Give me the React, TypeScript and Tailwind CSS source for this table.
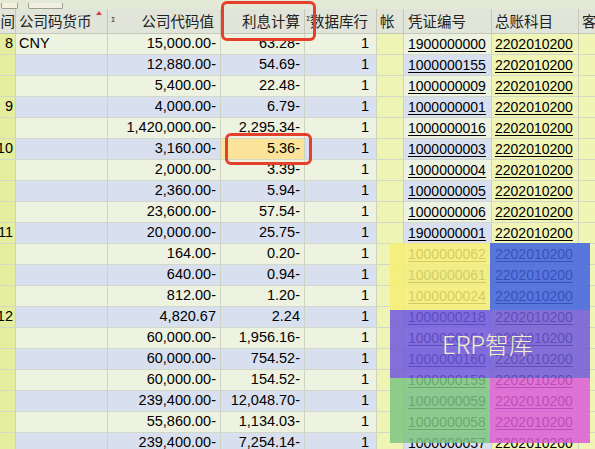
import React from "react";

type Row = { p?: string; cur?: string; amt: string; int: string; doc: string };

const rows: Row[] = [
  { p: "8", cur: "CNY", amt: "15,000.00-", int: "63.28-", doc: "1900000000" },
  { amt: "12,880.00-", int: "54.69-", doc: "1000000155" },
  { amt: "5,400.00-", int: "22.48-", doc: "1000000009" },
  { p: "9", amt: "4,000.00-", int: "6.79-", doc: "1000000001" },
  { amt: "1,420,000.00-", int: "2,295.34-", doc: "1000000016" },
  { p: "10", amt: "3,160.00-", int: "5.36-", doc: "1000000003" },
  { amt: "2,000.00-", int: "3.39-", doc: "1000000004" },
  { amt: "2,360.00-", int: "5.94-", doc: "1000000005" },
  { amt: "23,600.00-", int: "57.54-", doc: "1000000006" },
  { p: "11", amt: "20,000.00-", int: "25.75-", doc: "1900000001" },
  { amt: "164.00-", int: "0.20-", doc: "1000000062" },
  { amt: "640.00-", int: "0.94-", doc: "1000000061" },
  { amt: "812.00-", int: "1.20-", doc: "1000000024" },
  { p: "12", amt: "4,820.67", int: "2.24", doc: "1000000218" },
  { amt: "60,000.00-", int: "1,956.16-", doc: "1000000161" },
  { amt: "60,000.00-", int: "754.52-", doc: "1000000160" },
  { amt: "60,000.00-", int: "154.52-", doc: "1000000159" },
  { amt: "239,400.00-", int: "12,048.70-", doc: "1000000059" },
  { amt: "55,860.00-", int: "1,134.03-", doc: "1000000058" },
  { amt: "239,400.00-", int: "7,254.14-", doc: "1000000057" },
];

const hc = "h-full flex items-center border-r border-[#c3c8ba] shrink-0 overflow-hidden whitespace-nowrap";
const dc = "h-full flex items-center border-r border-[#cdd3c3] shrink-0 overflow-hidden whitespace-nowrap";

export default function App() {
  return (
    <div className="relative w-[595px] h-[449px] overflow-hidden bg-[#e6ebd8] text-[14px] text-black font-['Liberation_Sans','Noto_Sans_CJK_SC',sans-serif]">
      {/* toolbar strip */}
      <div className="h-[9px] flex items-end gap-[10px] pl-[1px] bg-[#e4e9d6]">
        <div className="w-[17px] h-[6px] border border-t-0 border-[#9aa08e] rounded-b-[2px] bg-[#f3f0dc]" />
        <div className="w-[35px] h-[6px] border border-t-0 border-[#9aa08e] rounded-b-[2px] bg-[#f0efe2]" />
      </div>
      {/* header */}
      <div className="h-[25px] flex bg-[#e1e4d9] border-b border-[#c3c8ba] font-['Noto_Sans_CJK_SC',sans-serif] text-[14.5px] text-[#222]">
        <div className={`${hc} w-[16px] justify-end`}>间</div>
        <div className={`${hc} w-[92px] pl-[3px] relative`}>
          公司码货币
          <span className="absolute right-[5px] top-[2px] w-0 h-0 border-l-[3px] border-r-[3px] border-b-[4px] border-l-transparent border-r-transparent border-b-[#d04040]" />
        </div>
        <div className={`${hc} w-[113px] justify-end pr-[6px] relative`}>
          <span className="absolute left-[3px] top-[6px] text-[7px] font-['DejaVu_Sans',sans-serif] text-[#333]">Σ</span>
          公司代码值
        </div>
        <div className={`${hc} w-[84px] justify-end pr-[4px]`}>利息计算</div>
        <div className={`${hc} w-[72px] pl-[5px] relative`}>
          <span className="absolute left-[1px] top-[5px] text-[7px] font-['DejaVu_Sans',sans-serif] text-[#333]">Σ</span>
          数据库行
        </div>
        <div className={`${hc} w-[27px] pl-[3px]`}>帐</div>
        <div className={`${hc} w-[88px] pl-[4px]`}>凭证编号</div>
        <div className={`${hc} w-[87px] pl-[3px]`}>总账科目</div>
        <div className="h-full flex items-center pl-[3px]">客</div>
      </div>
      {/* rows */}
      {rows.map((r, i) => {
        const blue = i % 2 === 1;
        const bg = blue ? "bg-[#d8e0f0]" : "bg-[#eef2e0]";
        return (
          <div key={i} className="h-[21px] flex border-b border-[#d3d9c8]">
            <div className={`${dc} w-[16px] justify-end pr-[2px] bg-[#e5ee9e] text-[14.5px]`}>{r.p}</div>
            <div className={`${dc} w-[92px] pl-[3px] text-[14.5px] ${bg}`}>{r.cur}</div>
            <div className={`${dc} w-[113px] justify-end pr-[4px] text-[14.5px] ${bg}`}>{r.amt}</div>
            <div className={`${dc} w-[84px] justify-end pr-[4px] text-[14.5px] ${i === 5 ? "bg-[#fbe49a]" : bg}`}>{r.int}</div>
            <div className={`${dc} w-[72px] justify-end pr-[7px] text-[14.5px] ${bg}`}>1</div>
            <div className={`${dc} w-[27px] bg-[#eef4b4]`} />
            <div className={`${dc} w-[88px] pl-[4px] ${bg}`}>
              <span className="underline underline-offset-[2px]">{r.doc}</span>
            </div>
            <div className={`${dc} w-[87px] pl-[3px] bg-[#f0f5b6]`}>
              <span className="underline underline-offset-[2px]">2202010200</span>
            </div>
            <div className="h-full flex-1 bg-[#f0f5b6]" />
          </div>
        );
      })}

      {/* red highlight boxes */}
      <div className="absolute left-[221px] top-[1px] w-[95px] h-[40px] border-[3px] border-[#e5402c] rounded-[6px]" />
      <div className="absolute left-[225px] top-[133px] w-[87px] h-[32px] border-[3px] border-[#e5402c] rounded-[6px]" />

      {/* watermark */}
      <div className="absolute left-[390px] top-[243px] w-[100px] h-[67px] bg-[#f6ef74]/85" />
      <div className="absolute left-[490px] top-[243px] w-[100px] h-[67px] bg-[#3e5fe0]/85" />
      <div className="absolute left-[390px] top-[310px] w-[200px] h-[68px] bg-[#7058dc]/85" />
      <div className="absolute left-[390px] top-[378px] w-[100px] h-[65px] bg-[#7cc480]/85" />
      <div className="absolute left-[490px] top-[378px] w-[100px] h-[65px] bg-[#dc5cd8]/85" />
      <div className="absolute left-[442px] top-[328px] text-[24px] leading-[32px] text-[#f3f0c8] font-['Noto_Sans_CJK_SC',sans-serif] font-light">
        ERP智库
      </div>
    </div>
  );
}
